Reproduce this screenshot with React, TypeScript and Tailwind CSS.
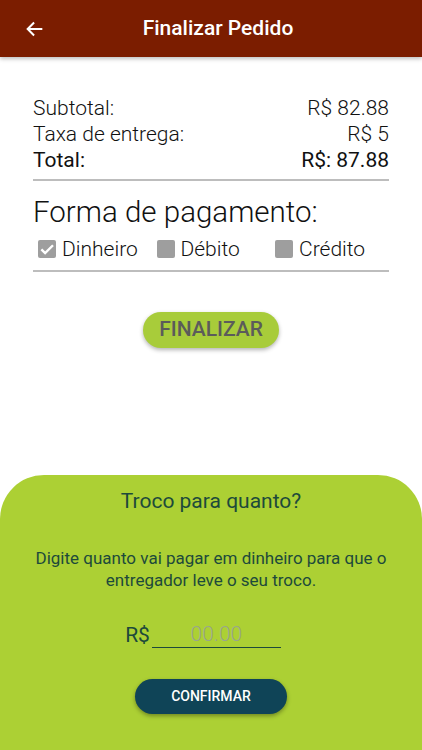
import { useState } from 'react';

const payments = ['Dinheiro', 'Débito', 'Crédito'];

function CheckBox({ checked }: { checked: boolean }) {
  return (
    <span className="flex h-[18px] w-[18px] items-center justify-center rounded-[2px] bg-[#9e9e9e]">
      {checked && (
        <svg viewBox="0 0 24 24" className="h-[18px] w-[18px]" fill="none" stroke="white" strokeWidth="3.2">
          <path d="M4.5 12.5l5 5L20 7" />
        </svg>
      )}
    </span>
  );
}

export default function App() {
  const [selected, setSelected] = useState('Dinheiro');
  const [troco, setTroco] = useState('');

  return (
    <div className="flex h-[750px] w-[422px] flex-col overflow-hidden bg-white font-['Roboto',sans-serif]">
      <header className="relative z-10 flex h-[57px] shrink-0 items-center bg-[#7b1d00] px-6 shadow-[0_2px_4px_rgba(0,0,0,0.25)]">
        <svg viewBox="0 0 24 24" className="h-[22px] w-[22px]" fill="none" stroke="white" strokeWidth="2.2">
          <path d="M20 12H4.5M11 5l-7 7 7 7" />
        </svg>
        <h1 className="flex-1 pr-[8px] text-center text-[21px] font-medium text-white">Finalizar Pedido</h1>
      </header>

      <main className="flex-1 px-[33px] pt-[38px]">
        <div className="text-[21px] font-light leading-[26px] text-[#111]">
          <div className="flex justify-between">
            <span>Subtotal:</span>
            <span>R$ 82.88</span>
          </div>
          <div className="flex justify-between">
            <span>Taxa de entrega:</span>
            <span>R$ 5</span>
          </div>
          <div className="flex justify-between font-normal">
            <span>Total:</span>
            <span>R$: 87.88</span>
          </div>
        </div>
        <div className="mt-[6px] h-[2px] bg-[#bdbdbd]" />

        <h2 className="mt-[13px] text-[29.5px] font-light leading-[36px] text-[#111]">Forma de pagamento:</h2>
        <div className="mt-[6px] flex pl-[5px]">
          {payments.map((p) => (
            <button
              key={p}
              onClick={() => setSelected(p)}
              className="flex w-[118.5px] shrink-0 items-center gap-[6px] text-[21px] font-light leading-[26px] text-[#111]"
            >
              <CheckBox checked={selected === p} />
              <span>{p}</span>
            </button>
          ))}
        </div>
        <div className="mt-[8px] h-[2px] bg-[#bdbdbd]" />

        <div className="mt-[40px] flex justify-center">
          <button className="h-[36px] w-[136px] rounded-full bg-[#a8cc3a] text-[21px] font-medium text-[#5b5b5b] shadow-[0_2px_4px_rgba(0,0,0,0.3)]">
            FINALIZAR
          </button>
        </div>
      </main>

      <section className="flex h-[275px] shrink-0 flex-col items-center rounded-t-[44px] bg-[#acd034] px-6 pt-[13px] text-[#1d4a3b]">
        <h3 className="text-[21px] leading-[26px]">Troco para quanto?</h3>
        <p className="mt-[33px] text-center text-[17px] leading-[22px]">
          Digite quanto vai pagar em dinheiro para que o entregador leve o seu troco.
        </p>
        <div className="mr-[16px] mt-[32px] flex items-end">
          <span className="text-[21px] leading-[25px]">R$</span>
          <input
            value={troco}
            onChange={(e) => setTroco(e.target.value)}
            placeholder="00.00"
            className="ml-[2px] h-[25px] w-[129px] border-b border-[#1d4a3b] bg-transparent text-center text-[21px] font-light text-[#1d4a3b] outline-none placeholder:text-[#98a58e]"
          />
        </div>
        <button className="mt-[31px] h-[35px] w-[152px] rounded-full bg-[#0f4457] text-[14px] font-medium text-white shadow-[0_2px_4px_rgba(0,0,0,0.35)]">
          CONFIRMAR
        </button>
      </section>
    </div>
  );
}
